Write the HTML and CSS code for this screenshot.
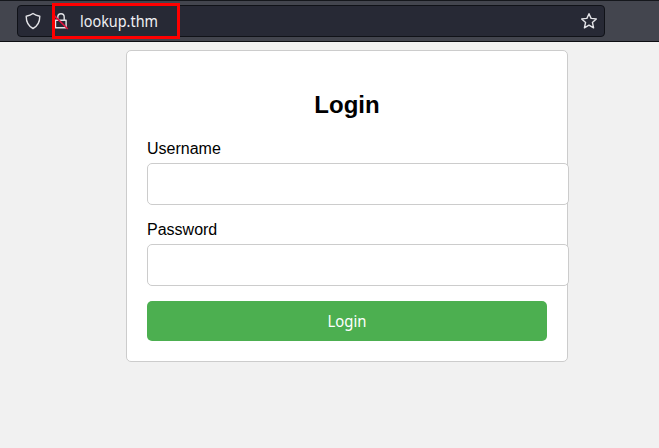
FILE: index.html
```html
<!DOCTYPE html>
<html lang="en">
<head>
<meta charset="utf-8">
<title>Login</title>
<link rel="stylesheet" href="styles.css">
</head>
<body>
<header class="toolbar">
  <div class="urlbar">
    <svg class="icon shield" width="16" height="18" viewBox="0 0 16 18"><path d="M8 1.5 C6.2 2.9 3.8 3.8 1.2 4.3 C1.2 9.8 3 14 8 16.5 C13 14 14.8 9.8 14.8 4.3 C12.2 3.8 9.8 2.9 8 1.5Z"/></svg>
    <svg class="icon lock" width="16" height="18" viewBox="0 0 16 18"><path d="M4.8 7.8V5a3.2 3.2 0 0 1 6.4 0v2.8M2.5 8.2h10.6v7.6H2.5z"/><path class="slash" d="M1 3.4L14.3 16.5"/></svg>
    <span class="address">lookup.thm</span>
    <svg class="icon star" width="18" height="18" viewBox="0 0 18 18"><path d="M9 1.7l2.1 4.7 5.2.5-3.9 3.5 1.2 5.4L9 13.1l-4.6 2.7 1.2-5.4L1.7 6.9l5.2-.5z"/></svg>
  </div>
  <div class="highlight"></div>
</header>
<main class="card">
  <h2>Login</h2>
  <form>
    <label for="username">Username</label>
    <input id="username" type="text">
    <label for="password">Password</label>
    <input id="password" type="password">
    <button type="button"><span class="caption">Login</span></button>
  </form>
</main>
</body>
</html>
```
FILE: styles.css
```css
body {
  margin: 0;
  height: 448px;
  overflow: hidden;
  background: #f1f1f1;
  font: 16px/18px "Liberation Sans", Arial, sans-serif;
  color: #000;
}
.toolbar {
  position: relative;
  box-sizing: border-box;
  height: 42px;
  padding: 4px 54px 4px 17px;
  background: #43454e;
  border-top: 1px solid #15171c;
  border-bottom: 1px solid #0c0d12;
}
.urlbar {
  box-sizing: border-box;
  display: flex;
  align-items: center;
  height: 32px;
  padding: 0 6px 0 7px;
  background: #272935;
  border: 1px solid #101218;
  border-radius: 4px;
}
.icon {
  fill: none;
  stroke: #e4e4e8;
  stroke-width: 1.4;
  stroke-linejoin: round;
  stroke-linecap: round;
}
.lock { margin-left: 12px; }
.icon .slash { stroke: #e0143f; stroke-width: 1.7; }
.address {
  margin-left: 11px;
  font: 16px/22px "Noto Sans", sans-serif;
  transform: scaleX(0.9);
  transform-origin: left;
  color: #f0f0f4;
}
.star { margin-left: auto; }
.highlight {
  position: absolute;
  left: 52px;
  top: 2px;
  box-sizing: border-box;
  width: 128px;
  height: 36px;
  border: 3px solid #f00;
}
.card {
  width: 400px;
  height: 270px;
  margin: 8px 0 0 126px;
  padding: 20px;
  background: #fff;
  border: 1px solid #ccc;
  border-radius: 5px;
}
h2 {
  margin: 20px 0 21px;
  font-size: 24px;
  line-height: 28px;
  text-align: center;
}
form {
  display: flex;
  flex-direction: column;
  align-items: flex-start;
}
label { margin-bottom: 5px; }
input {
  box-sizing: border-box;
  width: 422px;
  height: 42px;
  margin: 0 0 16px;
  padding: 10px;
  border: 1px solid #ccc;
  border-radius: 5px;
  background: #fff;
}
button {
  width: 400px;
  height: 40px;
  margin-top: -1px;
  padding: 0;
  border: 0;
  border-radius: 5px;
  background: #4caf50;
  color: #fff;
  font: 16px/22px "Noto Sans", sans-serif;
}
.caption {
  display: inline-block;
  transform: scaleX(0.93);
}
```
